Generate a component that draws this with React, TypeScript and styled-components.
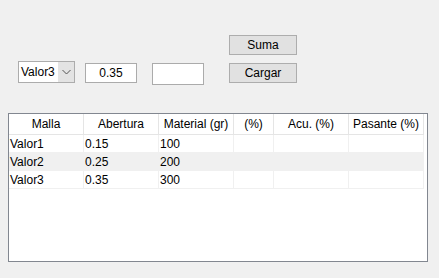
import styled, { createGlobalStyle } from "styled-components";

const GlobalStyle = createGlobalStyle`
  html, body {
    margin: 0;
    padding: 0;
    background: #f0f0f0;
  }
  body {
    font-family: "Liberation Sans", Arial, sans-serif;
    font-size: 12px;
    color: #000;
  }
`;

const Frame = styled.div`
  width: 439px;
  height: 278px;
  background: #f0f0f0;
  padding-top: 35px;
  box-sizing: border-box;
`;

const Controls = styled.div`
  display: flex;
  align-items: flex-end;
  padding-left: 18px;
  height: 48px;
`;

const Combo = styled.div`
  display: flex;
  width: 57px;
  height: 22px;
  box-sizing: border-box;
  border: 1px solid #acacac;
  background: #fff;
`;

const ComboText = styled.span`
  flex: 1;
  line-height: 20px;
  padding-left: 2px;
`;

const ComboArrow = styled.span`
  width: 16px;
  background: #e3e3e3;
  display: flex;
  align-items: center;
  justify-content: center;
`;

const Field = styled.div<{ $gap: number; $h: number; $drop: number }>`
  width: 52px;
  height: ${({ $h }) => $h}px;
  margin-left: ${({ $gap }) => $gap}px;
  margin-bottom: ${({ $drop }) => $drop}px;
  box-sizing: border-box;
  border: 1px solid #ababab;
  background: #fff;
  text-align: center;
  line-height: ${({ $h }) => $h - 2}px;
`;

const ButtonStack = styled.div`
  display: flex;
  flex-direction: column;
  gap: 8px;
  margin-left: 25px;
`;

const Button = styled.button`
  width: 68px;
  height: 20px;
  box-sizing: border-box;
  border: 1px solid #adadad;
  background: #e1e1e1;
  font-family: "Liberation Sans", Arial, sans-serif;
  font-size: 12px;
  color: #000;
  padding: 0;
`;

const TableBox = styled.div`
  margin: 30px 0 0 8px;
  width: 420px;
  height: 149px;
  box-sizing: border-box;
  border: 1px solid #828790;
  background: #fff;
`;

const Grid = styled.table`
  border-collapse: collapse;
  table-layout: fixed;
  width: 415px;
`;

const Head = styled.th<{ $w: number }>`
  width: ${({ $w }) => $w}px;
  height: 20px;
  padding: 0;
  font-weight: normal;
  text-align: center;
  border-right: 1px solid #e5e5e5;
  border-bottom: 1px solid #e5e5e5;
  background: #fff;
`;

const Row = styled.tr<{ $alt: boolean }>`
  background: ${({ $alt }) => ($alt ? "#f0f0f0" : "#fff")};
`;

const Cell = styled.td`
  height: 17px;
  padding: 0 0 0 1px;
  border-right: 1px solid #f0f0f0;
  border-bottom: 1px solid #f0f0f0;
  white-space: nowrap;
  overflow: hidden;
`;

const columns = [
  { name: "Malla", w: 74 },
  { name: "Abertura", w: 74 },
  { name: "Material (gr)", w: 74 },
  { name: "(%)", w: 39 },
  { name: "Acu. (%)", w: 74 },
  { name: "Pasante (%)", w: 74 },
];

const rows = [
  ["Valor1", "0.15", "100", "", "", ""],
  ["Valor2", "0.25", "200", "", "", ""],
  ["Valor3", "0.35", "300", "", "", ""],
];

const App = () => {
  return (
    <Frame>
      <GlobalStyle />
      <Controls>
        <Combo>
          <ComboText>Valor3</ComboText>
          <ComboArrow>
            <svg width="9" height="6" viewBox="0 0 9 6">
              <path d="M0.5 1 L4.5 5 L8.5 1" fill="none" stroke="#555" strokeWidth="1" />
            </svg>
          </ComboArrow>
        </Combo>
        <Field $gap={10} $h={20} $drop={0}>0.35</Field>
        <Field $gap={15} $h={22} $drop={-2}></Field>
        <ButtonStack>
          <Button>Suma</Button>
          <Button>Cargar</Button>
        </ButtonStack>
      </Controls>
      <TableBox>
        <Grid>
          <thead>
            <tr>
              {columns.map((c) => (
                <Head key={c.name} $w={c.w}>
                  {c.name}
                </Head>
              ))}
            </tr>
          </thead>
          <tbody>
            {rows.map((r, i) => (
              <Row key={i} $alt={i % 2 === 1}>
                {r.map((v, j) => (
                  <Cell key={j}>{v}</Cell>
                ))}
              </Row>
            ))}
          </tbody>
        </Grid>
      </TableBox>
    </Frame>
  );
};

export default App;
